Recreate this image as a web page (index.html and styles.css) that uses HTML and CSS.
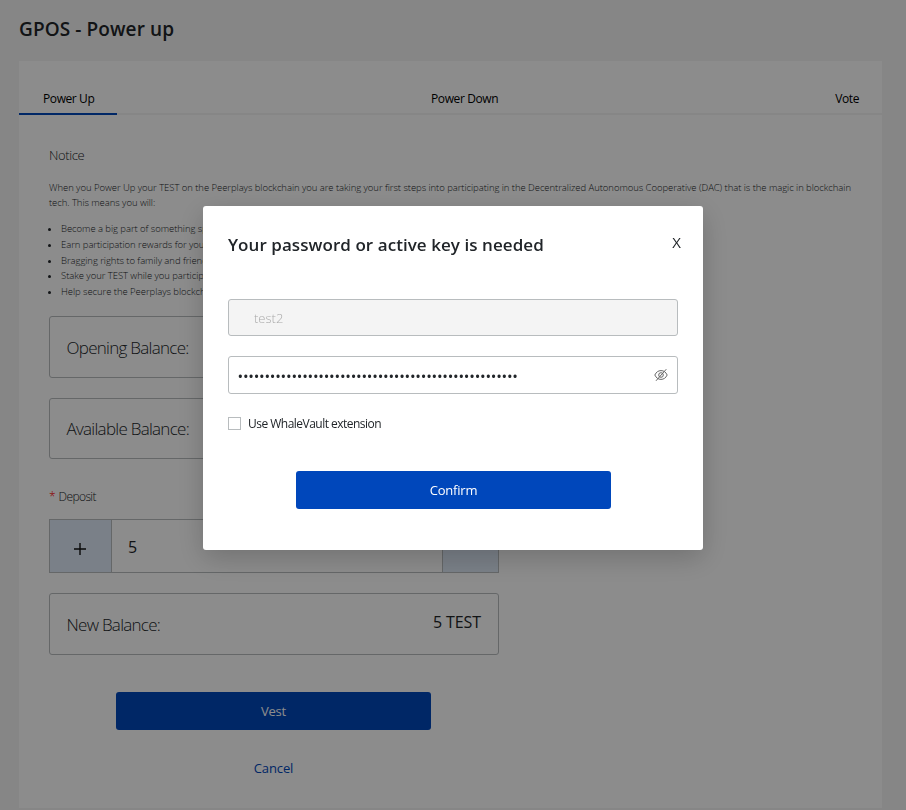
FILE: index.html
```html
<!DOCTYPE html>
<html lang="en">
<head>
<meta charset="utf-8">
<title>GPOS - Power up</title>
<link rel="stylesheet" href="styles.css">
</head>
<body>
<main class="page">
  <h1 class="page-title">GPOS - Power up</h1>
  <section class="card">
    <nav class="tabs">
      <a class="tab tab-active">Power Up</a>
      <a class="tab">Power Down</a>
      <a class="tab">Vote</a>
    </nav>
    <div class="content">
      <h2 class="notice-title">Notice</h2>
      <p class="notice-text">When you Power Up your TEST on the Peerplays blockchain you are taking your first steps into participating in the Decentralized Autonomous Cooperative (DAC) that is the magic in blockchain<br>tech. This means you will:</p>
      <ul class="notice-list">
        <li>Become a big part of something special</li>
        <li>Earn participation rewards for your vote</li>
        <li>Bragging rights to family and friends</li>
        <li>Stake your TEST while you participate</li>
        <li>Help secure the Peerplays blockchain</li>
      </ul>
      <form class="form">
        <div class="balance"><span>Opening Balance:</span></div>
        <div class="balance balance-available"><span>Available Balance:</span></div>
        <label class="deposit-label"><span class="required">*</span> Deposit</label>
        <div class="deposit">
          <span class="step step-plus"><svg width="12" height="12" viewBox="0 0 12 12"><path d="M6 0v12M0 6h12" fill="none" stroke="#111" stroke-width="1.4"/></svg></span>
          <span class="amount">5</span>
          <span class="step step-minus"></span>
        </div>
        <div class="balance balance-new"><span>New Balance:</span><span class="balance-value">5 TEST</span></div>
        <div class="actions">
          <button type="button" class="button">Vest</button>
          <a class="cancel">Cancel</a>
        </div>
      </form>
    </div>
  </section>
</main>
<div class="overlay">
  <div class="modal" role="dialog">
    <header class="modal-header">
      <h2 class="modal-title">Your password or active key is needed</h2>
      <span class="close">X</span>
    </header>
    <div class="field field-disabled">test2</div>
    <div class="field field-password">
      <span class="dots">••••••••••••••••••••••••••••••••••••••••••••••••••••</span>
      <svg class="eye" width="14" height="14" viewBox="0 0 14 14" fill="none" stroke="#666" stroke-width="1"><path d="M.8 7C2.2 4.1 4.3 2.6 7 2.6S11.8 4.1 13.2 7C11.8 9.900 9.700 11.400 7 11.400S2.200 9.900.8 7Z"/><circle cx="7" cy="7" r="2.300"/><path d="M2 12.800 12.300 1.200"/></svg>
    </div>
    <label class="check"><span class="box"></span><span class="check-text">Use WhaleVault extension</span></label>
    <button type="button" class="button button-confirm">Confirm</button>
  </div>
</div>
</body>
</html>
```

FILE: styles.css
```css
* { box-sizing: border-box; }
body {
  margin: 0;
  height: 810px;
  overflow: hidden;
  background: #f4f4f4;
  color: #212529;
  font-family: "Open Sans", "Noto Sans", sans-serif;
  font-size: 12px;
}
h1, h2, p, ul { margin: 0; }
.page { padding: 14px 24px 0 19px; }
.page-title {
  height: 47px;
  line-height: 30px;
  font-size: 19px;
  font-weight: 600;
  letter-spacing: 0.1px;
  white-space: nowrap;
}
.card { height: 747px; background: #fff; }
.tabs {
  display: flex;
  justify-content: space-between;
  height: 54px;
  border-bottom: 2px solid #f4f4f4;
}
.tab {
  height: 54px;
  padding: 28px 23px 0 24px;
  line-height: 20px;
  font-weight: 500;
  letter-spacing: -0.4px;
  color: #000;
  white-space: nowrap;
}
.tab-active { width: 98px; border-bottom: 2px solid #0047bb; }
.content { padding: 30px 30px 0; font-weight: 300; }
.notice-title { font-size: 13px; font-weight: 300; line-height: 20px; letter-spacing: -0.4px; }
.notice-text {
  margin-top: 15px;
  font-size: 9.5px;
  line-height: 15px;
  white-space: nowrap;
  letter-spacing: -0.055px;
}
.notice-list {
  margin-top: 11px;
  padding-left: 12px;
  font-size: 9.5px;
  line-height: 15.75px;
  letter-spacing: -0.055px;
}
.form { width: 450px; margin-top: 16px; }
.balance {
  display: flex;
  align-items: center;
  justify-content: space-between;
  height: 62px;
  padding: 2px 17px 0 16.5px;
  border: 1px solid #b8bcbe;
  border-radius: 3px;
  font-size: 17px;
  letter-spacing: -0.72px;
}
.balance-available { height: 61px; margin-top: 20px; padding-top: 0; }
.balance-new { margin-top: 20px; }
.balance-value { padding-bottom: 5px; font-size: 16px; font-weight: 400; letter-spacing: -0.1px; }
.deposit-label { display: block; margin-top: 28px; line-height: 20px; letter-spacing: -0.6px; word-spacing: 1px; }
.required { color: #f00; }
.deposit {
  display: flex;
  height: 54px;
  margin-top: 12px;
  border: 1px solid #b8bcbe;
}
.step { display: flex; align-items: center; justify-content: center; background: #dfeaf8; }
.step-plus { width: 62px; padding: 6px 1px 0 0; border-right: 1px solid #b8bcbe; }
.step-minus { width: 56px; border-left: 1px solid #b8bcbe; }
.amount { flex: 1; padding-left: 16px; font-size: 16px; font-weight: 400; line-height: 54px; }
.actions { display: flex; flex-direction: column; align-items: center; width: 449px; margin-top: 37px; }
.button {
  width: 315px;
  height: 38px;
  padding: 0;
  border: 0;
  border-radius: 3px;
  background: #0047bb;
  color: #fff;
  font: 400 13px/38px "Open Sans", "Noto Sans", sans-serif;
  letter-spacing: -0.2px;
}
.cancel { margin-top: 28px; font-size: 13px; font-weight: 400; line-height: 20px; letter-spacing: -0.1px; color: #0047bb; }
.overlay {
  position: fixed;
  inset: 0;
  display: flex;
  align-items: flex-start;
  justify-content: center;
  padding-top: 206px;
  background: rgba(0, 0, 0, 0.45);
}
.modal {
  width: 500px;
  height: 344px;
  padding: 25px;
  border-radius: 3px;
  background: #fff;
  box-shadow: 0 8px 28px rgba(0, 0, 0, 0.2);
}
.modal-header { display: flex; justify-content: space-between; height: 68px; }
.modal-title { font-size: 17px; font-weight: 600; line-height: 27px; letter-spacing: 0.06px; white-space: nowrap; }
.close { margin-right: -3px; font-size: 15px; line-height: 22px; }
.field {
  display: flex;
  align-items: center;
  height: 37px;
  padding: 1px 9px 0 25px;
  border: 1px solid #b8bcbe;
  border-radius: 3px;
  font-size: 13px;
}
.field-disabled { background: #f4f4f4; color: #aaa; font-weight: 300; }
.field-password { justify-content: space-between; height: 38px; margin-top: 20px; padding: 0 9px 0 8.5px; }
.dots { padding-top: 2px; font-size: 15px; letter-spacing: -0.25px; }
.check { display: flex; align-items: center; height: 20px; margin-top: 19px; }
.box { width: 13px; height: 13px; margin-right: 7px; border: 1px solid #b8bcbe; }
.check-text { letter-spacing: -0.52px; }
.button-confirm { display: block; margin: 38px 0 0 68px; }
```
